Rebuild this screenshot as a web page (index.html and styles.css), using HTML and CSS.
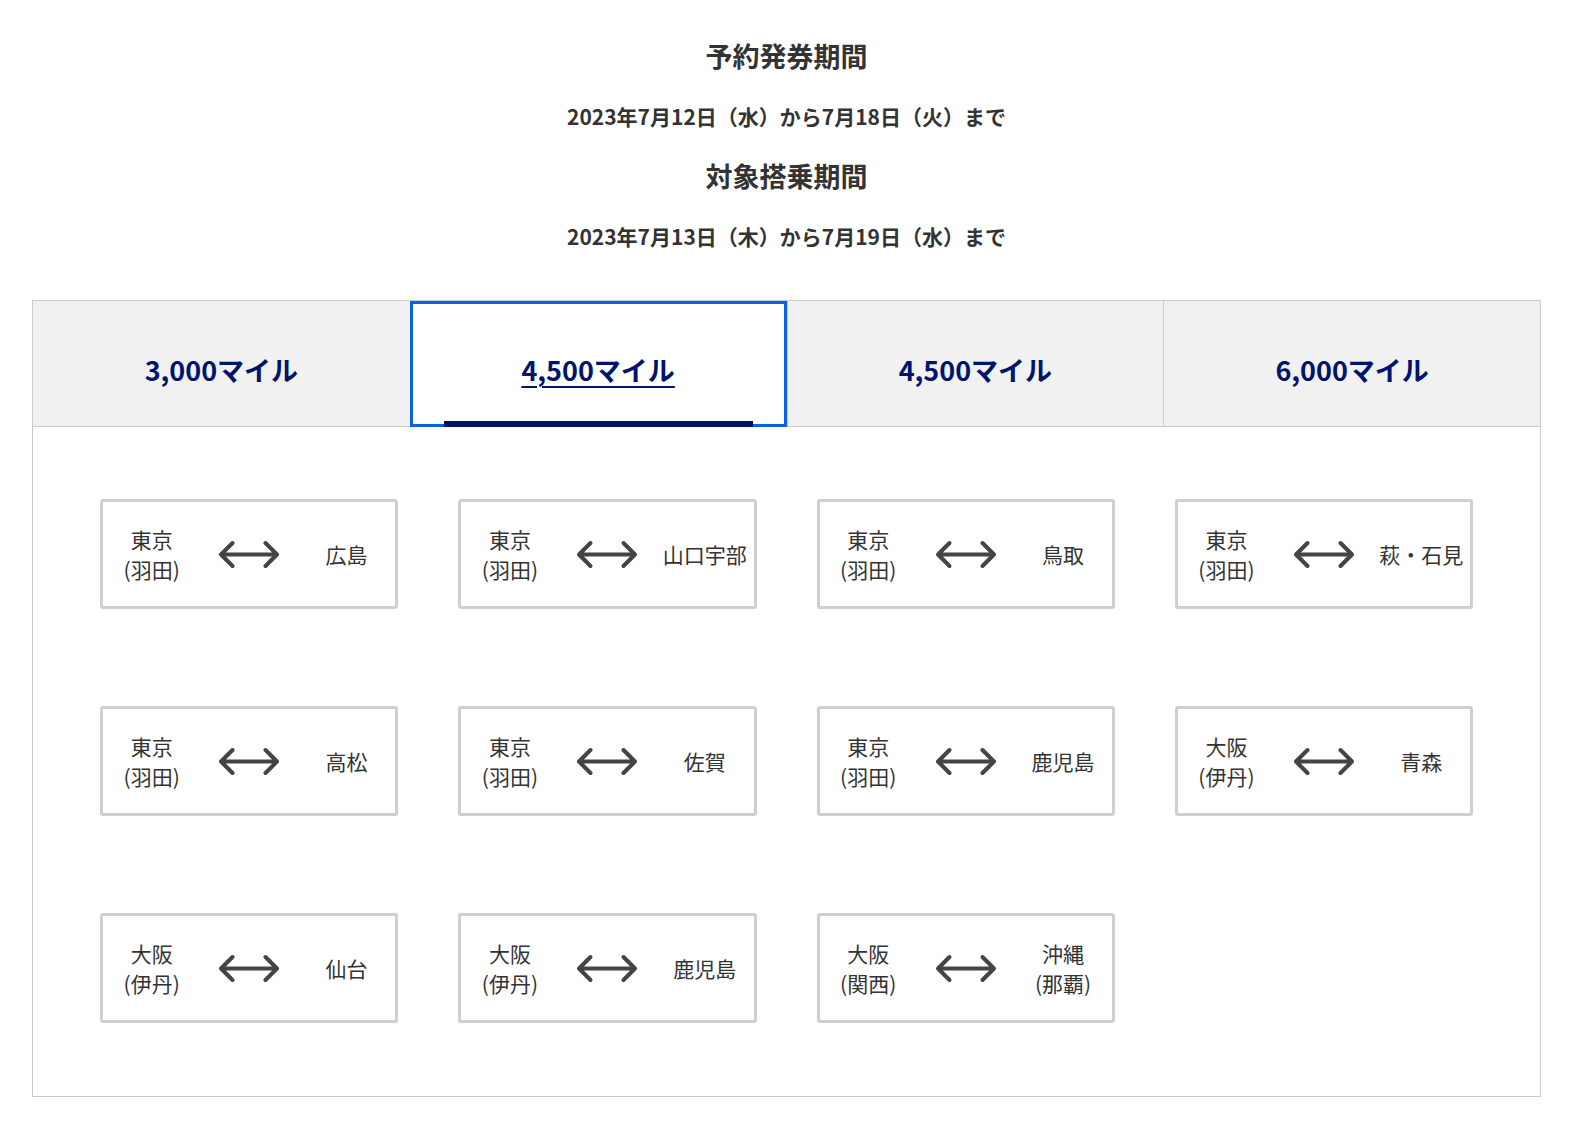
FILE: index.html
```html
<!DOCTYPE html>
<html lang="ja">
<head>
<meta charset="utf-8">
<title>期間</title>
<link rel="stylesheet" href="styles.css">
</head>
<body>
<div class="page">
  <div class="periods">
    <h2 class="period-title">予約発券期間</h2>
    <p class="period-date">2023年7月12日（水）から7月18日（火）まで</p>
    <h2 class="period-title">対象搭乗期間</h2>
    <p class="period-date">2023年7月13日（木）から7月19日（水）まで</p>
  </div>

  <div class="tabbox">
    <div class="tabs">
      <div class="tab"><span class="tab-label">3,000マイル</span></div>
      <div class="tab tab-active"><span class="tab-label">4,500マイル</span><span class="tab-bar"></span></div>
      <div class="tab"><span class="tab-label">4,500マイル</span></div>
      <div class="tab"><span class="tab-label">6,000マイル</span></div>
    </div>
    <div class="panel">
      <div class="route"><div class="place">東京<br>(羽田)</div><div class="arrow"><svg width="64" height="31" viewBox="0 0 64 31"><path d="M4 15.5H60M15.5 4L4 15.5L15.5 27M48.5 4L60 15.5L48.5 27" fill="none" stroke="#444" stroke-width="4" stroke-linecap="round" stroke-linejoin="round"/></svg></div><div class="place">広島</div></div>
      <div class="route"><div class="place">東京<br>(羽田)</div><div class="arrow"><svg width="64" height="31" viewBox="0 0 64 31"><path d="M4 15.5H60M15.5 4L4 15.5L15.5 27M48.5 4L60 15.5L48.5 27" fill="none" stroke="#444" stroke-width="4" stroke-linecap="round" stroke-linejoin="round"/></svg></div><div class="place">山口宇部</div></div>
      <div class="route"><div class="place">東京<br>(羽田)</div><div class="arrow"><svg width="64" height="31" viewBox="0 0 64 31"><path d="M4 15.5H60M15.5 4L4 15.5L15.5 27M48.5 4L60 15.5L48.5 27" fill="none" stroke="#444" stroke-width="4" stroke-linecap="round" stroke-linejoin="round"/></svg></div><div class="place">鳥取</div></div>
      <div class="route"><div class="place">東京<br>(羽田)</div><div class="arrow"><svg width="64" height="31" viewBox="0 0 64 31"><path d="M4 15.5H60M15.5 4L4 15.5L15.5 27M48.5 4L60 15.5L48.5 27" fill="none" stroke="#444" stroke-width="4" stroke-linecap="round" stroke-linejoin="round"/></svg></div><div class="place">萩・石見</div></div>

      <div class="route"><div class="place">東京<br>(羽田)</div><div class="arrow"><svg width="64" height="31" viewBox="0 0 64 31"><path d="M4 15.5H60M15.5 4L4 15.5L15.5 27M48.5 4L60 15.5L48.5 27" fill="none" stroke="#444" stroke-width="4" stroke-linecap="round" stroke-linejoin="round"/></svg></div><div class="place">高松</div></div>
      <div class="route"><div class="place">東京<br>(羽田)</div><div class="arrow"><svg width="64" height="31" viewBox="0 0 64 31"><path d="M4 15.5H60M15.5 4L4 15.5L15.5 27M48.5 4L60 15.5L48.5 27" fill="none" stroke="#444" stroke-width="4" stroke-linecap="round" stroke-linejoin="round"/></svg></div><div class="place">佐賀</div></div>
      <div class="route"><div class="place">東京<br>(羽田)</div><div class="arrow"><svg width="64" height="31" viewBox="0 0 64 31"><path d="M4 15.5H60M15.5 4L4 15.5L15.5 27M48.5 4L60 15.5L48.5 27" fill="none" stroke="#444" stroke-width="4" stroke-linecap="round" stroke-linejoin="round"/></svg></div><div class="place">鹿児島</div></div>
      <div class="route"><div class="place">大阪<br>(伊丹)</div><div class="arrow"><svg width="64" height="31" viewBox="0 0 64 31"><path d="M4 15.5H60M15.5 4L4 15.5L15.5 27M48.5 4L60 15.5L48.5 27" fill="none" stroke="#444" stroke-width="4" stroke-linecap="round" stroke-linejoin="round"/></svg></div><div class="place">青森</div></div>

      <div class="route"><div class="place">大阪<br>(伊丹)</div><div class="arrow"><svg width="64" height="31" viewBox="0 0 64 31"><path d="M4 15.5H60M15.5 4L4 15.5L15.5 27M48.5 4L60 15.5L48.5 27" fill="none" stroke="#444" stroke-width="4" stroke-linecap="round" stroke-linejoin="round"/></svg></div><div class="place">仙台</div></div>
      <div class="route"><div class="place">大阪<br>(伊丹)</div><div class="arrow"><svg width="64" height="31" viewBox="0 0 64 31"><path d="M4 15.5H60M15.5 4L4 15.5L15.5 27M48.5 4L60 15.5L48.5 27" fill="none" stroke="#444" stroke-width="4" stroke-linecap="round" stroke-linejoin="round"/></svg></div><div class="place">鹿児島</div></div>
      <div class="route"><div class="place">大阪<br>(関西)</div><div class="arrow"><svg width="64" height="31" viewBox="0 0 64 31"><path d="M4 15.5H60M15.5 4L4 15.5L15.5 27M48.5 4L60 15.5L48.5 27" fill="none" stroke="#444" stroke-width="4" stroke-linecap="round" stroke-linejoin="round"/></svg></div><div class="place">沖縄<br>(那覇)</div></div>
    </div>
  </div>
</div>
</body>
</html>
```

FILE: styles.css
```css
html, body {
  margin: 0;
  padding: 0;
  background: #fff;
}

body {
  font-family: "Noto Sans CJK JP", "Noto Sans", sans-serif;
  color: #333;
}

.page {
  padding: 36px 33px 0 32px;
}

.periods {
  text-align: center;
}

.period-title {
  margin: 0 0 20px;
  font-size: 27px;
  line-height: 40px;
  font-weight: 700;
  color: #333;
}

.period-date {
  margin: 0 0 20px;
  font-size: 21px;
  line-height: 40px;
  font-weight: 700;
  color: #333;
}

.periods .period-date:last-child {
  margin-bottom: 44px;
}

.tabbox {
  border: 1px solid #ccc;
}

.tabs {
  display: grid;
  grid-template-columns: repeat(4, 1fr);
  border-bottom: 1px solid #ccc;
  background: #f1f1f1;
}

.tab {
  position: relative;
  height: 125px;
  display: flex;
  align-items: center;
  justify-content: center;
  padding-top: 11px;
  box-sizing: border-box;
  border-left: 1px solid #ccc;
}

.tab:first-child {
  border-left: none;
}

.tab-label {
  font-size: 27px;
  font-weight: 700;
  color: #00146b;
}

.tab-active {
  background: #fff;
  border-left: none;
  outline: 3px solid #0a62e0;
  outline-offset: -3px;
  z-index: 1;
  margin-bottom: -1px;
  height: 126px;
}

.tab-active .tab-label {
  text-decoration: underline;
  text-decoration-thickness: 2px;
  text-underline-offset: 5px;
}

.tab-bar {
  position: absolute;
  left: 34px;
  right: 34px;
  bottom: 0;
  height: 6px;
  background: #001266;
}

.panel {
  display: grid;
  grid-template-columns: repeat(4, 1fr);
  column-gap: 60px;
  row-gap: 97px;
  padding: 72px 67px 73px;
}

.route {
  display: grid;
  grid-template-columns: 1fr 1fr 1fr;
  align-items: center;
  height: 110px;
  box-sizing: border-box;
  border: 3px solid #cfcfcf;
  border-radius: 3px;
}

.place {
  text-align: center;
  font-size: 21px;
  line-height: 30px;
  color: #333;
  white-space: nowrap;
}

.arrow {
  display: flex;
  justify-content: center;
  align-items: center;
}

.arrow svg {
  display: block;
}
```
